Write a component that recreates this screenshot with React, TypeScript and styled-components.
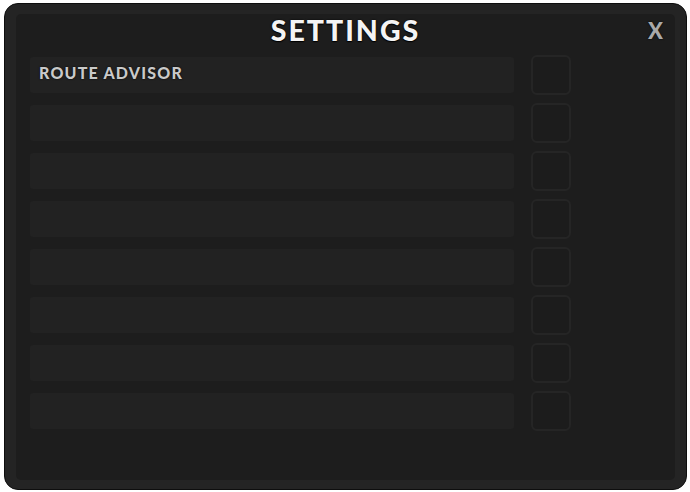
import React from "react";
import styled, { createGlobalStyle } from "styled-components";

const Global = createGlobalStyle`
  html, body { margin: 0; padding: 0; background: #ffffff; }
  body { font-family: Lato, "Noto Sans", sans-serif; }
`;

const Frame = styled.div`
  box-sizing: border-box;
  width: 683px;
  height: 487px;
  margin: 3px 0 0 4px;
  padding: 10px 11px 9px 11px;
  background: #242424;
  border: 1px solid #0e0e0e;
  border-radius: 14px;
`;

const Panel = styled.div`
  box-sizing: border-box;
  height: 100%;
  background: #1d1d1d;
  border-radius: 5px;
  display: flex;
  flex-direction: column;
`;

const Header = styled.div`
  height: 41px;
  display: grid;
  grid-template-columns: 1fr auto 1fr;
  align-items: start;
`;

const Title = styled.h1`
  grid-column: 2;
  margin: 0;
  padding-top: 1px;
  font-family: Lato, sans-serif;
  font-weight: 900;
  font-size: 28.5px;
  line-height: 30px;
  letter-spacing: 2px;
  color: #f4f4f4;
  text-shadow: 0 0 2px #000, 0 1px 1px #000;
`;

const Close = styled.button`
  grid-column: 3;
  justify-self: end;
  margin: 8px 12px 0 0;
  padding: 0;
  border: none;
  background: none;
  font-family: Lato, sans-serif;
  font-weight: 900;
  font-size: 22px;
  line-height: 18px;
  color: #a9a9a9;
  text-shadow: 0 0 2px #000;
  cursor: pointer;
`;

const List = styled.div`
  display: flex;
  flex-direction: column;
  gap: 8px;
  padding-left: 14px;
`;

const Row = styled.div`
  display: grid;
  grid-template-columns: 484px 40px;
  column-gap: 17px;
  align-items: center;
  height: 40px;
`;

const Label = styled.div`
  box-sizing: border-box;
  height: 36px;
  background: #222222;
  border-radius: 3px;
  padding: 0 0 6px 9px;
  display: flex;
  align-items: center;
  font-family: Lato, sans-serif;
  font-weight: 900;
  font-size: 16px;
  letter-spacing: 1.2px;
  color: #c9c9c9;
  text-shadow: 0 0 2px #000;
`;

const Check = styled.div`
  box-sizing: border-box;
  width: 40px;
  height: 40px;
  border: 2px solid #252525;
  border-radius: 6px;
  background: #1c1c1c;
`;

const labels = ["ROUTE ADVISOR", "", "", "", "", "", "", ""];

export default function App() {
  return (
    <>
      <Global />
      <Frame>
        <Panel>
          <Header>
            <Title>SETTINGS</Title>
            <Close>X</Close>
          </Header>
          <List>
            {labels.map((l, i) => (
              <Row key={i}>
                <Label>{l}</Label>
                <Check />
              </Row>
            ))}
          </List>
        </Panel>
      </Frame>
    </>
  );
}
